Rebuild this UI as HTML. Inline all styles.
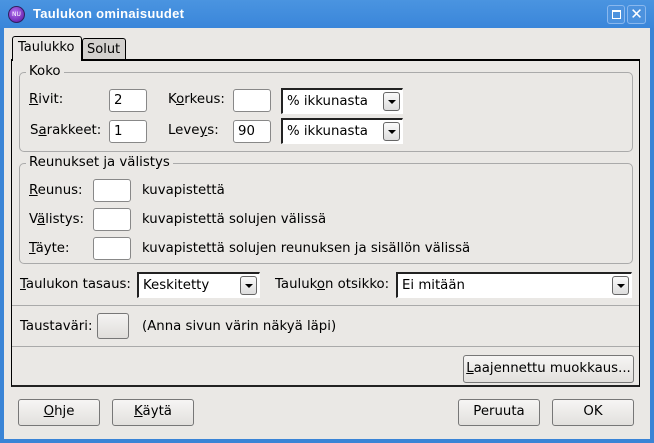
<!DOCTYPE html><html><head><style>
*{box-sizing:border-box;margin:0;padding:0}
body{width:654px;height:443px;overflow:hidden;background:#eae8e5;font-family:"DejaVu Sans","Liberation Sans",sans-serif;font-size:13.3px;color:#000;position:relative}
.a{position:absolute;white-space:nowrap}
.inp{position:absolute;background:#fff;border:1px solid #888;border-radius:3px;padding:2px 4px;line-height:17px}
.cmb{position:absolute;background:#fff;border-top:2px solid #222;border-left:2px solid #222;border-right:1px solid #fff;border-bottom:1px solid #fff;padding:2px 4px;line-height:19px}
.arr{position:absolute;right:2px;top:2px;width:17px;height:19px;border:1px solid #666;border-radius:3px;background:linear-gradient(#fafafa,#ddd)}
.arr:after{content:"";position:absolute;left:4px;top:7px;border-left:4px solid transparent;border-right:4px solid transparent;border-top:4px solid #000}
.grp{position:absolute;border:1px solid #aaa;border-radius:5px}
.lg{position:absolute;background:#eae8e5;padding:0 3px}
.btn{position:absolute;border:1px solid #777;border-radius:3px;background:linear-gradient(#f6f5f4,#e2e0dd);text-align:center;line-height:24px}
u{text-decoration:underline}
</style></head><body>
<div class="a" style="left:0;top:0;width:654px;height:443px;border:4px solid #3a84d6;border-top:none;"></div>
<div class="a" style="left:0;top:0;width:654px;height:28px;background:linear-gradient(#4a94e0,#3a86da)"></div>
<div class="a" style="left:8px;top:6px;width:17px;height:17px;border-radius:50%;background:radial-gradient(circle at 40% 35%,#b070f0,#5a10a0);border:1px solid #302060;color:#fff;font-size:6px;line-height:15px;text-align:center">NU</div>
<div class="a" style="left:33px;top:6px;color:#fff;font-weight:bold;font-size:13px;font-family:'Liberation Sans',sans-serif;letter-spacing:0.3px">Taulukon ominaisuudet</div>
<div class="a" style="left:607px;top:5px;width:18px;height:19px;border:1px solid #8ab8ee;border-radius:3px;background:#4c92de"><div style="position:absolute;left:4px;top:4px;width:9px;height:9px;border:1.5px solid #fff;border-top-width:2px"></div></div>
<div class="a" style="left:627px;top:5px;width:19px;height:19px;border:1px solid #8ab8ee;border-radius:3px;background:#4c92de;color:#fff;font-size:15px;font-weight:bold;text-align:center;line-height:17px">✕</div>

<div class="a" style="left:11px;top:59px;width:629px;height:328px;border:1px solid #000;border-top:2px solid #000;border-bottom:2px solid #222"></div>
<div class="a" style="left:12px;top:36px;width:70px;height:25px;border:1px solid #000;border-bottom:none;border-radius:3px 3px 0 0;background:#eae8e5;padding:3px 0 0 5px;font-size:13px">Taulukko</div>
<div class="a" style="left:82px;top:38px;width:44px;height:21px;border:1px solid #000;border-bottom:none;border-radius:3px 3px 0 0;background:#d3d1ce;padding:3px 0 0 4px;font-size:13px">Solut</div>

<div class="grp" style="left:19px;top:72px;width:614px;height:80px"></div>
<div class="lg a" style="left:26px;top:64px">Koko</div>
<div class="a" style="left:29px;top:92px"><u>R</u>ivit:</div>
<div class="inp" style="left:109px;top:89px;width:38px;height:23px">2</div>
<div class="a" style="left:168px;top:92px">K<u>o</u>rkeus:</div>
<div class="inp" style="left:233px;top:89px;width:38px;height:23px"></div>
<div class="cmb" style="left:281px;top:88px;width:122px;height:26px">% ikkunasta<div class="arr"></div></div>
<div class="a" style="left:30px;top:123px">S<u>a</u>rakkeet:</div>
<div class="inp" style="left:109px;top:120px;width:38px;height:23px">1</div>
<div class="a" style="left:168px;top:123px">Leve<u>y</u>s:</div>
<div class="inp" style="left:233px;top:120px;width:38px;height:23px">90</div>
<div class="cmb" style="left:281px;top:118px;width:122px;height:26px">% ikkunasta<div class="arr"></div></div>

<div class="grp" style="left:19px;top:163px;width:614px;height:101px"></div>
<div class="lg a" style="left:26px;top:155px">Reunukset ja välistys</div>
<div class="a" style="left:29px;top:183px"><u>R</u>eunus:</div>
<div class="inp" style="left:93px;top:179px;width:38px;height:23px"></div>
<div class="a" style="left:142px;top:183px">kuvapistettä</div>
<div class="a" style="left:29px;top:212px">V<u>ä</u>listys:</div>
<div class="inp" style="left:93px;top:208px;width:38px;height:23px"></div>
<div class="a" style="left:142px;top:212px">kuvapistettä solujen välissä</div>
<div class="a" style="left:29px;top:241px"><u>T</u>äyte:</div>
<div class="inp" style="left:93px;top:237px;width:38px;height:23px"></div>
<div class="a" style="left:142px;top:241px">kuvapistettä solujen reunuksen ja sisällön välissä</div>

<div class="a" style="left:20px;top:277px"><u>T</u>aulukon tasaus:</div>
<div class="cmb" style="left:137px;top:272px;width:123px;height:26px">Keskitetty<div class="arr"></div></div>
<div class="a" style="left:275px;top:277px">Tauluk<u>o</u>n otsikko:</div>
<div class="cmb" style="left:396px;top:272px;width:236px;height:26px">Ei mitään<div class="arr"></div></div>
<div class="a" style="left:12px;top:305px;width:627px;height:1px;background:#aaa"></div>
<div class="a" style="left:20px;top:319px">Taustaväri:</div>
<div class="a" style="left:97px;top:313px;width:32px;height:26px;border:1px solid #777;border-radius:3px;background:linear-gradient(#f4f3f2,#e0dedb)"></div>
<div class="a" style="left:142px;top:319px">(Anna sivun värin näkyä läpi)</div>
<div class="a" style="left:12px;top:346px;width:627px;height:1px;background:#aaa"></div>
<div class="btn" style="left:463px;top:355px;width:171px;height:28px;line-height:26px"><u>L</u>aajennettu muokkaus...</div>

<div class="btn" style="left:18px;top:399px;width:82px;height:27px"><u>O</u>hje</div>
<div class="btn" style="left:112px;top:399px;width:82px;height:27px"><u>K</u>äytä</div>
<div class="btn" style="left:458px;top:399px;width:82px;height:27px">Peruuta</div>
<div class="btn" style="left:552px;top:399px;width:82px;height:27px">OK</div>
</body></html>
